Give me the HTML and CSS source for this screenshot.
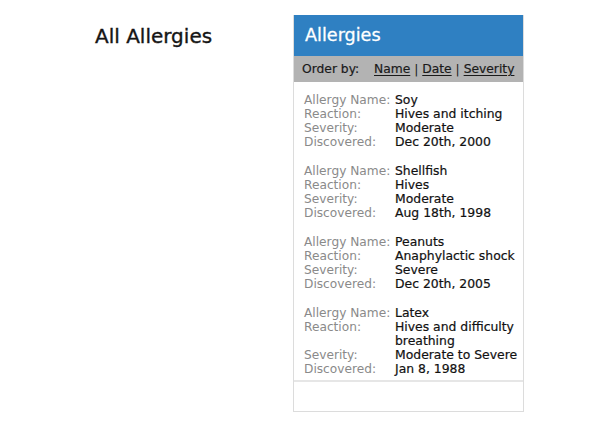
FILE: index.html
```html
<!DOCTYPE html>
<html>
<head>
<meta charset="utf-8">
<link rel="stylesheet" href="styles.css">
</head>
<body>
<div class="page">
  <h1 class="title">All Allergies</h1>
  <div class="panel">
    <div class="panel-header">Allergies</div>
    <div class="order-bar">
      <span class="order-label">Order by:</span>
      <span class="order-links"><a href="#">Name</a> | <a href="#">Date</a> | <a href="#">Severity</a></span>
    </div>
    <div class="list">
      <dl class="entry">
        <dt>Allergy Name:</dt><dd>Soy</dd>
        <dt>Reaction:</dt><dd>Hives and itching</dd>
        <dt>Severity:</dt><dd>Moderate</dd>
        <dt>Discovered:</dt><dd>Dec 20th, 2000</dd>
      </dl>
      <dl class="entry">
        <dt>Allergy Name:</dt><dd>Shellfish</dd>
        <dt>Reaction:</dt><dd>Hives</dd>
        <dt>Severity:</dt><dd>Moderate</dd>
        <dt>Discovered:</dt><dd>Aug 18th, 1998</dd>
      </dl>
      <dl class="entry">
        <dt>Allergy Name:</dt><dd>Peanuts</dd>
        <dt>Reaction:</dt><dd>Anaphylactic shock</dd>
        <dt>Severity:</dt><dd>Severe</dd>
        <dt>Discovered:</dt><dd>Dec 20th, 2005</dd>
      </dl>
      <dl class="entry">
        <dt>Allergy Name:</dt><dd>Latex</dd>
        <dt>Reaction:</dt><dd>Hives and difficulty breathing</dd>
        <dt>Severity:</dt><dd>Moderate to Severe</dd>
        <dt>Discovered:</dt><dd>Jan 8, 1988</dd>
      </dl>
    </div>
    <div class="panel-footer"></div>
  </div>
</div>
</body>
</html>
```

FILE: styles.css
```css
html, body {
  margin: 0;
  padding: 0;
  background: #ffffff;
}
body {
  font-family: "DejaVu Sans", "Liberation Sans", sans-serif;
  color: #111;
}
.page {
  display: flex;
  align-items: flex-start;
  padding: 15px 0 0 95px;
}
.title {
  margin: 9px 0 0 0;
  width: 198px;
  font-size: 20px;
  font-weight: normal;
  color: #151515;
  -webkit-text-stroke: 0.35px #151515;
}
.panel {
  width: 229px;
  border: 1px solid #dcdcdc;
  border-top: none;
  display: flex;
  flex-direction: column;
}
.panel-header {
  background: #2f80c2;
  color: #fff;
  height: 41px;
  line-height: 40px;
  padding-left: 11px;
  font-size: 17.6px;
  -webkit-text-stroke: 0.3px #fff;
}
.order-bar {
  background: #b3b3b3;
  height: 26px;
  display: flex;
  align-items: center;
  padding-left: 8px;
  font-size: 12.3px;
  color: #1a1a1a;
}
.order-label {
  width: 72px;
  -webkit-text-stroke: 0.2px #1a1a1a;
}
.order-links a {
  color: #1a1a1a;
  text-decoration: underline;
  text-underline-offset: 2px;
  -webkit-text-stroke: 0.2px #1a1a1a;
}
.list {
  padding: 11px 0 4px 10px;
}
.entry {
  display: grid;
  grid-template-columns: 91px 1fr;
  margin: 0 0 15px 0;
  font-size: 12.4px;
  line-height: 14px;
}
.entry:last-child {
  margin-bottom: 0;
}
.entry dt {
  color: #8a8a8a;
  white-space: nowrap;
  font-size: 12.2px;
}
.entry dd {
  margin: 0;
  color: #111;
  -webkit-text-stroke: 0.2px #111;
}
.panel-footer {
  border-top: 2px solid #e6e6e6;
  height: 29px;
}
```
